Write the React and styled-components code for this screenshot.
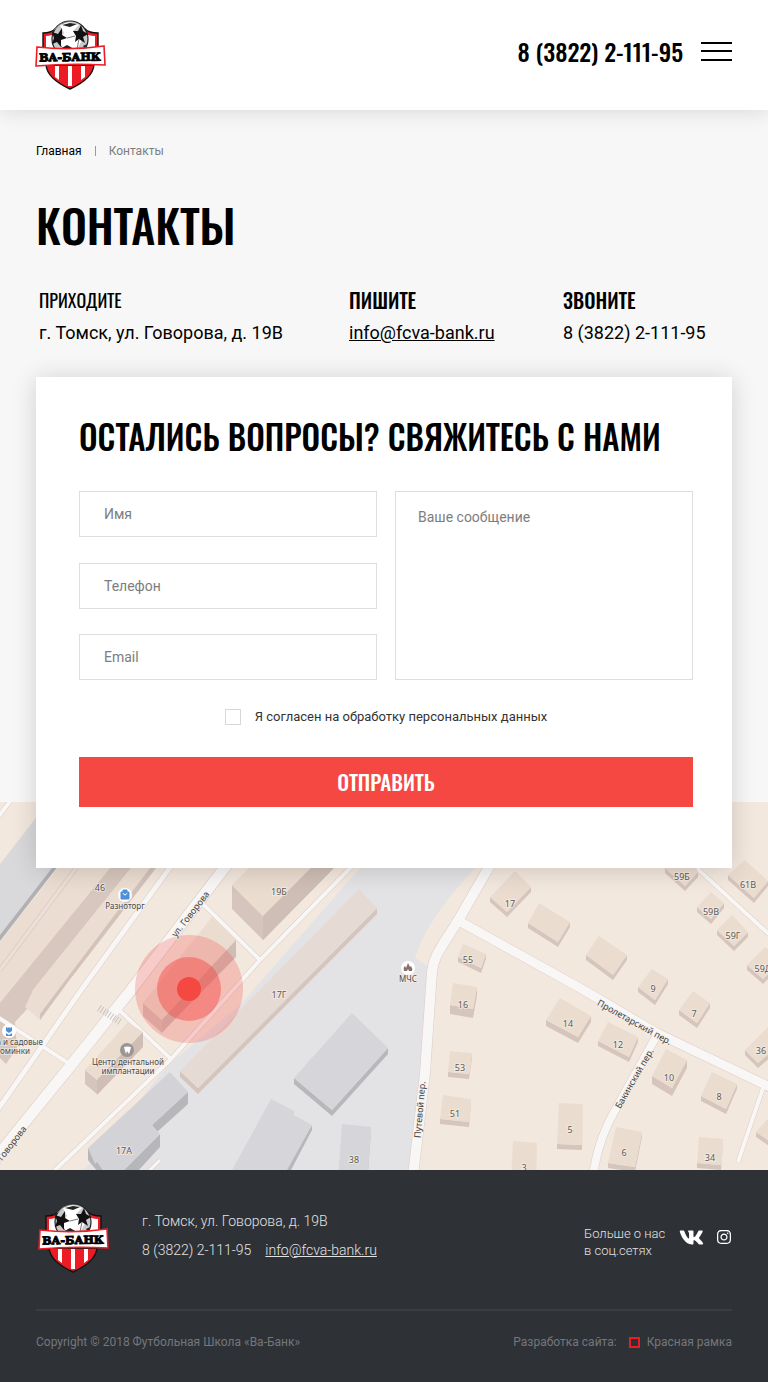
import React from "react";
import styled, { createGlobalStyle } from "styled-components";
import { FaInstagram, FaVk } from "react-icons/fa";

const display = `Oswald, "Roboto Condensed", "Liberation Sans Narrow", sans-serif`;

const GlobalStyle = createGlobalStyle`
  *, *::before, *::after { box-sizing: border-box; }
  body {
    margin: 0;
    background: #f7f7f7;
    color: #000;
    font-family: Roboto, "Liberation Sans", sans-serif;
  }
  a { color: inherit; }
`;

const Header = styled.header`
  position: relative;
  display: flex;
  align-items: center;
  justify-content: space-between;
  height: 110px;
  padding: 0 36px 0 35px;
  background: #fff;
  box-shadow: 0 2px 20px rgba(0, 0, 0, 0.12);
`;

const HeaderTools = styled.div`
  display: flex;
  align-items: center;
  gap: 18px;
  margin-bottom: 8px;
`;

const HeaderPhone = styled.a`
  font: 500 24px/32px ${display};
  text-decoration: none;
`;

const MenuButton = styled.button`
  display: flex;
  flex-direction: column;
  justify-content: space-between;
  width: 31px;
  height: 19px;
  padding: 0;
  border: 0;
  background: none;
`;

const MenuLine = styled.span`
  height: 2px;
  background: #000;
`;

const LogoLink = styled.a`
  display: block;
  width: 71px;
  height: 70px;
  flex: none;
`;

const Content = styled.main`
  padding: 34px 36px 0;
`;

const Breadcrumbs = styled.nav`
  display: flex;
  align-items: center;
  gap: 13px;
  font-size: 12px;
  line-height: 14px;
  color: #7d7d7d;
`;

const CrumbLink = styled.a`
  color: #000;
  text-decoration: none;
`;

const CrumbDivider = styled.span`
  width: 1px;
  height: 10px;
  background: #999;
`;

const PageTitle = styled.h1`
  margin: 36px 0 0;
  font: 500 46px/60px ${display};
`;

const Contacts = styled.div`
  display: grid;
  grid-template-columns: 313fr 214fr 169fr;
  margin-top: 32px;
`;

const Contact = styled.section`
  padding-left: ${(p) => (p.$inset ? "3px" : "0")};
`;

const ContactTitle = styled.h2`
  margin: 0;
  font: ${(p) => (p.$light ? "400 18px" : "500 20px")}/28px ${display};
`;

const ContactValue = styled.p`
  margin: 7px 0 0;
  font-size: 18px;
  line-height: 24px;
`;

const PlainLink = styled.a`
  text-decoration: none;
`;

const UnderlinedLink = styled.a`
  text-decoration: underline;
`;

const Card = styled.form`
  position: relative;
  z-index: 1;
  margin: 32px 0 -66px;
  padding: 39px 39px 61px 43px;
  background: #fff;
  box-shadow: 0 2px 24px rgba(0, 0, 0, 0.16);
`;

const CardTitle = styled.h2`
  margin: 0;
  font: 500 33px/42px ${display};
`;

const Fields = styled.div`
  display: grid;
  grid-template-columns: 1fr 1fr;
  gap: 18px;
  margin-top: 33px;
`;

const FieldColumn = styled.div`
  display: flex;
  flex-direction: column;
  justify-content: space-between;
`;

const Input = styled.input`
  width: 100%;
  height: 46px;
  padding: 0 24px;
  border: 1px solid #dedede;
  border-radius: 0;
  background: #fff;
  font: 14px/18px Roboto, sans-serif;
  &::placeholder { color: #7d7d7d; opacity: 1; }
`;

const Message = styled.textarea`
  display: block;
  width: 100%;
  height: 189px;
  padding: 16px 22px;
  border: 1px solid #dedede;
  border-radius: 0;
  background: #fff;
  font: 14px/18px Roboto, sans-serif;
  resize: none;
  &::placeholder { color: #7d7d7d; opacity: 1; }
`;

const Consent = styled.label`
  display: flex;
  align-items: center;
  justify-content: center;
  gap: 14px;
  margin-top: 29px;
  font-size: 13px;
  line-height: 16px;
  color: #333;
`;

const Checkbox = styled.input`
  appearance: none;
  width: 16px;
  height: 16px;
  margin: 0;
  border: 1px solid #d8d8d8;
  background: #fff;
  &:checked { background: #f54843; }
`;

const Submit = styled.button`
  display: block;
  width: 100%;
  height: 50px;
  margin-top: 32px;
  border: 0;
  background: #f54843;
  color: #fff;
  font: 500 21px/30px ${display};
`;

const MapView = styled.svg`
  display: block;
  width: 100%;
  height: 368px;
`;

const Footer = styled.footer`
  padding: 33px 36px 31px;
  background: #2e3136;
  color: #e2e2e3;
  font-weight: 300;
`;

const FooterTop = styled.div`
  display: flex;
  align-items: flex-start;
  padding: 0 0 36px 2px;
  border-bottom: 2px solid #3a3d42;
`;

const Address = styled.address`
  flex: 1;
  margin: 4px 0 0 33px;
  font-size: 14px;
  line-height: 29px;
  font-style: normal;
`;

const AddressLine = styled.div`
  display: flex;
  gap: 14px;
`;

const Social = styled.div`
  display: flex;
  align-items: flex-start;
  margin-top: 22px;
  font-size: 13px;
  line-height: 17px;
`;

const SocialText = styled.span`
  width: 95px;
`;

const SocialLink = styled.a`
  display: flex;
  align-items: center;
  height: 24px;
  color: #fff;
  & + & { margin-left: 12px; }
`;

const FooterBottom = styled.div`
  display: flex;
  align-items: center;
  justify-content: space-between;
  margin-top: 22px;
  font-size: 12px;
  font-weight: 400;
  line-height: 18px;
  color: #74777b;
`;

const Developer = styled.a`
  display: flex;
  align-items: center;
  gap: 7px;
  text-decoration: none;
`;

const RedFrame = styled.span`
  width: 11px;
  height: 11px;
  margin-left: 5px;
  border: 2px solid #ed1c24;
`;

function Logo() {
  return (
    <LogoLink href="#" aria-label="Ва-Банк">
      <svg width="71" height="70" viewBox="0 0 71 70">
        <path d="M8 13Q16 13 20 9H50Q54 13 63 13V30H8Z" fill="#ed1c24" stroke="#111" strokeWidth="1.4" />
        <path d="M11 16Q17 16 21 12H49Q53 16 60 16V30H11Z" fill="#fff" />
        <circle cx="35" cy="19" r="18" fill="#c9c9cb" stroke="#222" strokeWidth="1.2" />
        <path d="M25 5Q35 0 44 5L38 11L47 20L42 30H29L24 21L29 13Z" fill="#fff" />
        <path d="M17 12L23 14L27 8L27 15L32 18L26 20L26 27L22 22L17 24L19 18Z" fill="#111" />
        <path d="M38 11L43 11L46 5L48 11L53 14L48 17L50 23L44 19L40 22L41 16Z" fill="#111" />
        <path d="M27 5L35 3L42 4L35 7ZM25 29L32 25L39 29ZM48 26L52 24L50 29Z" fill="#222" />
        <path d="M19 10Q24 3 31 2M32 18L40 16M26 26L30 30M44 19L42 29" fill="none" stroke="#777" strokeWidth="1" />
        <path d="M11 45C12 56 24 64 35 69C46 64 58 56 59 45Z" fill="#ed1c24" stroke="#111" strokeWidth="1.4" />
        <path d="M20 46H24V60L20 57ZM33 46H37V66H33ZM46 46H50V57L46 60Z" fill="#fff" />
        <path d="M2 27Q35 31 69 26L70 45Q35 43 1 46Z" fill="#fff" stroke="#ed1c24" strokeWidth="1.6" />
        <text x="35" y="41" textAnchor="middle" fontFamily="DejaVu Serif, serif" fontWeight="700" fontSize="11" fill="#000" stroke="#000" strokeWidth="1" transform="rotate(-1 35 38)">ВА-БАНК</text>
      </svg>
    </LogoLink>
  );
}

// Each house: roof corners (top, right, bottom, left), then wall height.
const houses = [
  [515, 871, 531, 887, 507, 912, 490, 897, 5],
  [539, 903, 570, 922, 558, 942, 528, 923, 5],
  [599, 936, 627, 955, 613, 975, 586, 955, 5],
  [652, 969, 668, 979, 655, 1000, 638, 987, 5],
  [693, 991, 710, 1003, 697, 1023, 679, 1010, 5],
  [690, 852, 698, 872, 685, 886, 665, 868, 5],
  [745, 860, 768, 881, 754, 898, 728, 875, 5],
  [711, 892, 724, 903, 711, 919, 697, 907, 5],
  [732, 915, 748, 932, 734, 946, 717, 930, 5],
  [765, 947, 782, 960, 763, 979, 747, 965, 5],
  [463, 944, 486, 954, 481, 968, 458, 957, 5],
  [453, 983, 477, 987, 473, 1009, 450, 1005, 9],
  [560, 998, 591, 1016, 578, 1037, 546, 1020, 6],
  [608, 1022, 638, 1037, 629, 1057, 598, 1041, 5],
  [666, 1049, 687, 1060, 672, 1088, 652, 1076, 8],
  [712, 1072, 737, 1084, 726, 1109, 701, 1096, 5],
  [770, 1025, 785, 1040, 758, 1063, 745, 1050, 5],
  [450, 1051, 472, 1053, 469, 1074, 448, 1072, 5],
  [443, 1095, 471, 1099, 469, 1122, 440, 1119, 5],
  [559, 1103, 583, 1104, 582, 1145, 557, 1144, 5],
  [513, 1141, 537, 1143, 536, 1180, 511, 1180, 5],
  [616, 1127, 642, 1132, 635, 1167, 608, 1163, 5],
  [699, 1137, 723, 1139, 721, 1165, 697, 1163, 5],
  [771, 1115, 790, 1130, 775, 1145, 756, 1132, 5],
  [128, 1022, 143, 1032, 97, 1080, 85, 1070, 14],
  [212, 917, 236, 940, 162, 1020, 143, 1003, 13],
  [359, 889, 377, 908, 198, 1088, 180, 1071, 6],
  [270, 847, 330, 848, 263, 916, 232, 885, 24],
];

const greyHouses = [
  [352, 1013, 388, 1048, 332, 1110, 294, 1078, 6],
  [342, 1124, 371, 1127, 367, 1180, 338, 1180, 5],
];

const numbers = [
  ["46", 100, 891], ["19Б", 279, 895], ["17Г", 279, 998], ["17А", 124, 1154], ["38", 354, 1163],
  ["17", 510, 907], ["55", 468, 963], ["16", 463, 1008], ["53", 460, 1071], ["51", 455, 1117],
  ["14", 568, 1027], ["12", 618, 1048], ["10", 669, 1081], ["8", 719, 1100], ["9", 653, 992],
  ["7", 694, 1017], ["36", 761, 1054], ["5", 570, 1133], ["6", 624, 1156], ["34", 710, 1161],
  ["3", 524, 1171], ["59Б", 682, 880], ["61В", 748, 888], ["59В", 711, 915], ["59Г", 733, 939], ["59Д", 763, 972],
];

function House({ points, roof, wall }) {
  const [tx, ty, rx, ry, bx, by, lx, ly, d] = points;
  return (
    <g>
      <path d={`M${lx} ${ly}L${bx} ${by}L${rx} ${ry}V${ry + d}L${bx} ${by + d}L${lx} ${ly + d}Z`} fill={wall} />
      <path d={`M${tx} ${ty}L${rx} ${ry}L${bx} ${by}L${lx} ${ly}Z`} fill={roof} />
    </g>
  );
}

const roads = [
  ["M-4 820L14 796", 4],
  ["M174 862L84 986L-4 1112", 5],
  ["M-4 1016L68 1063", 4],
  ["M232 858L131 990L72 1064L-6 1160", 11],
  ["M202 903L260 960", 4],
  ["M118 1009L171 1059", 4],
  ["M360 858L260 960L171 1059L52 1173", 4],
  ["M146 1174L160 1160", 3],
  ["M500 848L459 919C440 950 434 955 432 972L425 1073L413 1176", 10],
  ["M459 921L580 988L657 1033L772 1088", 9],
  ["M657 1035L617 1107Q598 1138 593 1176", 8],
  ["M763 1088L738 1162", 4],
  ["M688 860L772 937", 4],
];

function ContactMap() {
  return (
    <MapView viewBox="0 802 768 368" preserveAspectRatio="xMidYMid slice" role="img" aria-label="Карта проезда">
      <rect x="-800" y="702" width="2400" height="568" fill="#f3e8de" />
      <path d="M0 864L50 800H110L0 941Z" fill="#d9d9db" />
      <path d="M0 935L52 868L58 866L0 941Z" fill="#b1b1b4" />
      <path d="M58 868H110L12 994L0 1010V942Z" fill="#ebddd1" />
      <path d="M0 970L76 868" stroke="#dfcdc6" strokeWidth="5" />
      <path d="M0 970L76 868" stroke="#ecdfd7" strokeWidth="3" />
      <path d="M110 868H131L33 990L28 1008L15 1022L17 1048L6 1064L0 1058V1003Z" fill="#d7c7be" />
      <path d="M131 868H150L40 1020L25 1007L33 990Z" fill="#ebddd1" />
      <path d="M150 868H156L68 982L40 1020V1014Z" fill="#d3c2ba" />
      <path d="M365 862L240 1005L168 1065L80 1175H413L428 1060L431 968L415 958Q428 916 481 862Z" fill="#e3e3e5" />
      {roads.map(([d, w]) => (
        <path key={d} d={d} fill="none" stroke="#dccac5" strokeWidth={w + 1} />
      ))}
      {roads.map(([d, w]) => (
        <path key={d} d={d} fill="none" stroke="#f8f7f6" strokeWidth={w} />
      ))}
      <path d="M99 1008L120 1022" stroke="#c9c3be" strokeWidth="7" strokeDasharray="1 2" />
      {houses.map((h) => (
        <House key={h.join()} points={h} roof={h[0] === 359 ? "#e6dad5" : "#ebdcd0"} wall="#d6c5bd" />
      ))}
      <path d="M236 940V957L162 1032V1020ZM143 1032V1047L97 1095V1080ZM263 916L334 846V868L263 940Z" fill="#cfbeb6" />
      {greyHouses.map((h) => (
        <House key={h.join()} points={h} roof="#d6d6da" wall="#b8b8bb" />
      ))}
      <path d="M188 1092V1104L157 1132L152 1125ZM160 1134V1147L137 1172H122ZM88 1148V1160L98 1172H108Z" fill="#b7b7ba" />
      <path d="M170 1072L188 1092L152 1125L160 1134L122 1172H104L97 1162L95 1164L88 1148Z" fill="#d3d3d7" />
      <path d="M312 1125V1130L290 1172H284Z" fill="#b8b8bb" />
      <path d="M271 1099L294 1111V1115L312 1125L286 1172H231Z" fill="#d6d6da" />

      <g fill="#f54843">
        <circle cx="189" cy="989" r="54" fillOpacity="0.25" />
        <circle cx="189" cy="989" r="32" fillOpacity="0.45" />
        <circle cx="189" cy="989" r="12" />
      </g>

      <circle cx="125" cy="895" r="7" fill="#fff" />
      <path d="M121 892H129V899H121ZM123 892V890H127V892" fill="#4f8fd6" stroke="#4f8fd6" strokeWidth="1" />
      <path d="M123 893Q125 897 127 893" fill="none" stroke="#fff" strokeWidth="1" />
      <circle cx="9" cy="1031" r="7" fill="#fff" />
      <path d="M6 1027L8 1028L9 1027L10 1028L12 1027V1031L9 1033L6 1031ZM6 1033L9 1035L12 1033V1036H6Z" fill="#4f8fd6" />
      <circle cx="127" cy="1050" r="7" fill="#9b9693" />
      <path d="M124 1047Q127 1046 131 1047L130 1051L129 1054L127 1051L126 1054L125 1051Z" fill="#fff" />
      <circle cx="408" cy="968" r="7" fill="#fff" />
      <path d="M404 971Q403 967 405 966L406 968L408 963L410 967L411 966Q413 969 412 971L409 971L408 969L407 971Z" fill="#8a706a" />

      <g fontFamily="Noto Sans, sans-serif" fill="#5d5b57" stroke="#f6eee7" strokeWidth="2" paintOrder="stroke" strokeOpacity="0.7" textAnchor="middle">
        <g fontSize="9">
          {numbers.map(([n, x, y]) => (
            <text key={n} x={x} y={y}>{n}</text>
          ))}
        </g>
        <g fontSize="8" fill="#4a4a4a">
          <text x="125" y="909">Разноторг</text>
          <text x="128" y="1065">Центр дентальной</text>
          <text x="128" y="1074">имплантации</text>
          <text x="43" y="1045" textAnchor="end">а и садовые</text>
          <text x="30" y="1054" textAnchor="end">оминки</text>
          <text x="408" y="982">МЧС</text>
        </g>
        <g fontSize="9" fill="#3e3e3e">
          <text transform="translate(193 916) rotate(-52)">ул. Говорова</text>
          <text transform="translate(13 1147) rotate(-52)">. Говорова</text>
          <text transform="translate(633 1025) rotate(29)">Пролетарский пер.</text>
          <text transform="translate(637 1080) rotate(-60)">Бакинский пер.</text>
          <text transform="translate(423 1110) rotate(-85)">Путевой пер.</text>
        </g>
      </g>
    </MapView>
  );
}

export default function App() {
  return (
    <>
      <GlobalStyle />
      <Header>
        <Logo />
        <HeaderTools>
          <HeaderPhone href="tel:83822211195">8 (3822) 2-111-95</HeaderPhone>
          <MenuButton type="button" aria-label="Меню">
            <MenuLine />
            <MenuLine />
            <MenuLine />
          </MenuButton>
        </HeaderTools>
      </Header>
      <Content>
        <Breadcrumbs>
          <CrumbLink href="#">Главная</CrumbLink>
          <CrumbDivider />
          <span>Контакты</span>
        </Breadcrumbs>
        <PageTitle>КОНТАКТЫ</PageTitle>
        <Contacts>
          <Contact $inset>
            <ContactTitle $light>ПРИХОДИТЕ</ContactTitle>
            <ContactValue>г. Томск, ул. Говорова, д. 19В</ContactValue>
          </Contact>
          <Contact>
            <ContactTitle>ПИШИТЕ</ContactTitle>
            <ContactValue><UnderlinedLink href="mailto:info@fcva-bank.ru">info@fcva-bank.ru</UnderlinedLink></ContactValue>
          </Contact>
          <Contact>
            <ContactTitle>ЗВОНИТЕ</ContactTitle>
            <ContactValue><PlainLink href="tel:83822211195">8 (3822) 2-111-95</PlainLink></ContactValue>
          </Contact>
        </Contacts>
        <Card>
          <CardTitle>ОСТАЛИСЬ ВОПРОСЫ? СВЯЖИТЕСЬ С НАМИ</CardTitle>
          <Fields>
            <FieldColumn>
              <Input type="text" placeholder="Имя" aria-label="Имя" />
              <Input type="tel" placeholder="Телефон" aria-label="Телефон" />
              <Input type="email" placeholder="Email" aria-label="Email" />
            </FieldColumn>
            <Message placeholder="Ваше сообщение" aria-label="Ваше сообщение" />
          </Fields>
          <Consent>
            <Checkbox type="checkbox" />
            Я согласен на обработку персональных данных
          </Consent>
          <Submit type="submit">ОТПРАВИТЬ</Submit>
        </Card>
      </Content>
      <ContactMap />
      <Footer>
        <FooterTop>
          <Logo />
          <Address>
            <div>г. Томск, ул. Говорова, д. 19В</div>
            <AddressLine>
              <PlainLink href="tel:83822211195">8 (3822) 2-111-95</PlainLink>
              <UnderlinedLink href="mailto:info@fcva-bank.ru">info@fcva-bank.ru</UnderlinedLink>
            </AddressLine>
          </Address>
          <Social>
            <SocialText>Больше о нас<br />в соц.сетях</SocialText>
            <SocialLink href="#" aria-label="ВКонтакте"><FaVk size={25} /></SocialLink>
            <SocialLink href="#" aria-label="Instagram"><FaInstagram size={16} /></SocialLink>
          </Social>
        </FooterTop>
        <FooterBottom>
          <span>Copyright © 2018 Футбольная Школа «Ва-Банк»</span>
          <Developer href="#">
            Разработка сайта:
            <RedFrame />
            Красная рамка
          </Developer>
        </FooterBottom>
      </Footer>
    </>
  );
}
